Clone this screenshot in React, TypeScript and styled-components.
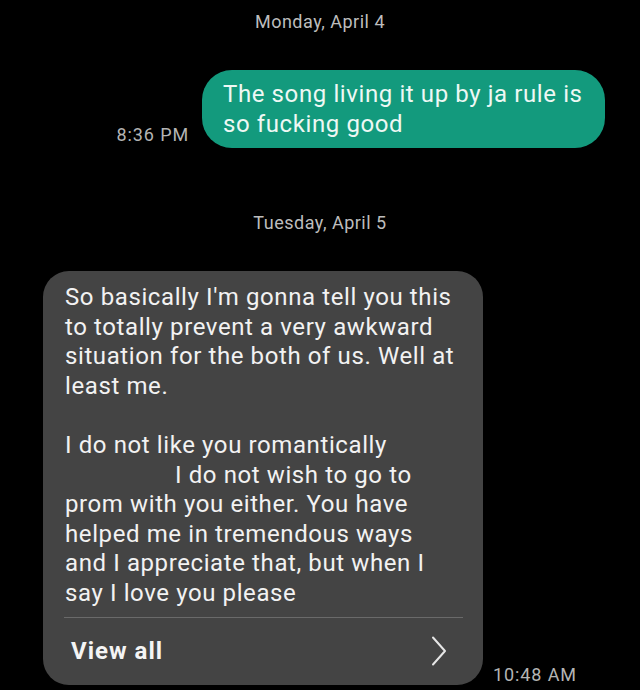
import React from "react";
import styled, { createGlobalStyle } from "styled-components";

const Global = createGlobalStyle`
  html, body { margin: 0; padding: 0; background: #000; }
  body { font-family: Roboto, "Noto Sans", Arial, sans-serif; -webkit-font-smoothing: antialiased; }
`;

const Screen = styled.div`
  width: 640px;
  height: 690px;
  background: #000;
  display: flex;
  flex-direction: column;
  overflow: hidden;
`;

const DateLabel = styled.div<{ $top: number }>`
  margin-top: ${(p) => p.$top}px;
  text-align: center;
  color: #bdbdbd;
  font-size: 18px;
  letter-spacing: 0.5px;
  line-height: 20px;
`;

const Row = styled.div<{ $side: "left" | "right"; $top: number }>`
  display: flex;
  align-items: flex-end;
  justify-content: ${(p) => (p.$side === "right" ? "flex-end" : "flex-start")};
  margin-top: ${(p) => p.$top}px;
  padding: ${(p) => (p.$side === "right" ? "0 35px 0 0" : "0 0 0 43px")};
  gap: ${(p) => (p.$side === "right" ? "13px" : "10px")};
`;

const Time = styled.div<{ $bottom: number }>`
  color: #b4b4b4;
  font-size: 18px;
  letter-spacing: 0.9px;
  line-height: 20px;
  margin-bottom: ${(p) => p.$bottom}px;
  white-space: nowrap;
`;

const SentBubble = styled.div`
  background: #139a7d;
  color: #eef8f4;
  border-radius: 30px;
  padding: 9px 21px 9px 21px;
  font-size: 24px;
  letter-spacing: 0.6px;
  line-height: 30px;
  width: 361px;
`;

const ReceivedBubble = styled.div`
  background: #444444;
  color: #f2f2f2;
  border-radius: 26px;
  width: 440px;
  display: flex;
  flex-direction: column;
`;

const Body = styled.div`
  padding: 12px 18px 8px 22px;
  font-size: 24px;
  letter-spacing: 0.6px;
  line-height: 29.6px;
  white-space: nowrap;
`;

const Indent = styled.span`
  display: inline-block;
  width: 110px;
`;

const Divider = styled.div`
  height: 1px;
  background: #6a6a6a;
  margin: 0 20px 0 21px;
`;

const Footer = styled.div`
  display: flex;
  align-items: center;
  justify-content: space-between;
  height: 67px;
  padding: 0 36px 0 28px;
`;

const ViewAll = styled.span`
  font-size: 24px;
  font-weight: 700;
  letter-spacing: 1px;
  color: #f4f4f4;
`;

const Chevron = () => (
  <svg width="16" height="30" viewBox="0 0 16 30" fill="none">
    <path d="M2 1.5 L14 15 L2 28.5" stroke="#e6e6e6" strokeWidth="2" strokeLinecap="round" strokeLinejoin="round" />
  </svg>
);

export default function App() {
  return (
    <Screen>
      <Global />
      <DateLabel $top={12}>Monday, April 4</DateLabel>
      <Row $side="right" $top={38}>
        <Time $bottom={3}>8:36 PM</Time>
        <SentBubble>
          The song living it up by ja rule is
          <br />
          so fucking good
        </SentBubble>
      </Row>
      <DateLabel $top={65}>Tuesday, April 5</DateLabel>
      <Row $side="left" $top={38}>
        <ReceivedBubble>
          <Body>
            So basically I'm gonna tell you this
            <br />
            to totally prevent a very awkward
            <br />
            situation for the both of us. Well at
            <br />
            least me.
            <br />
            <br />
            I do not like you romantically
            <br />
            <Indent />I do not wish to go to
            <br />
            prom with you either. You have
            <br />
            helped me in tremendous ways
            <br />
            and I appreciate that, but when I
            <br />
            say I love you please
          </Body>
          <Divider />
          <Footer>
            <ViewAll>View all</ViewAll>
            <Chevron />
          </Footer>
        </ReceivedBubble>
        <Time $bottom={0}>10:48 AM</Time>
      </Row>
    </Screen>
  );
}
